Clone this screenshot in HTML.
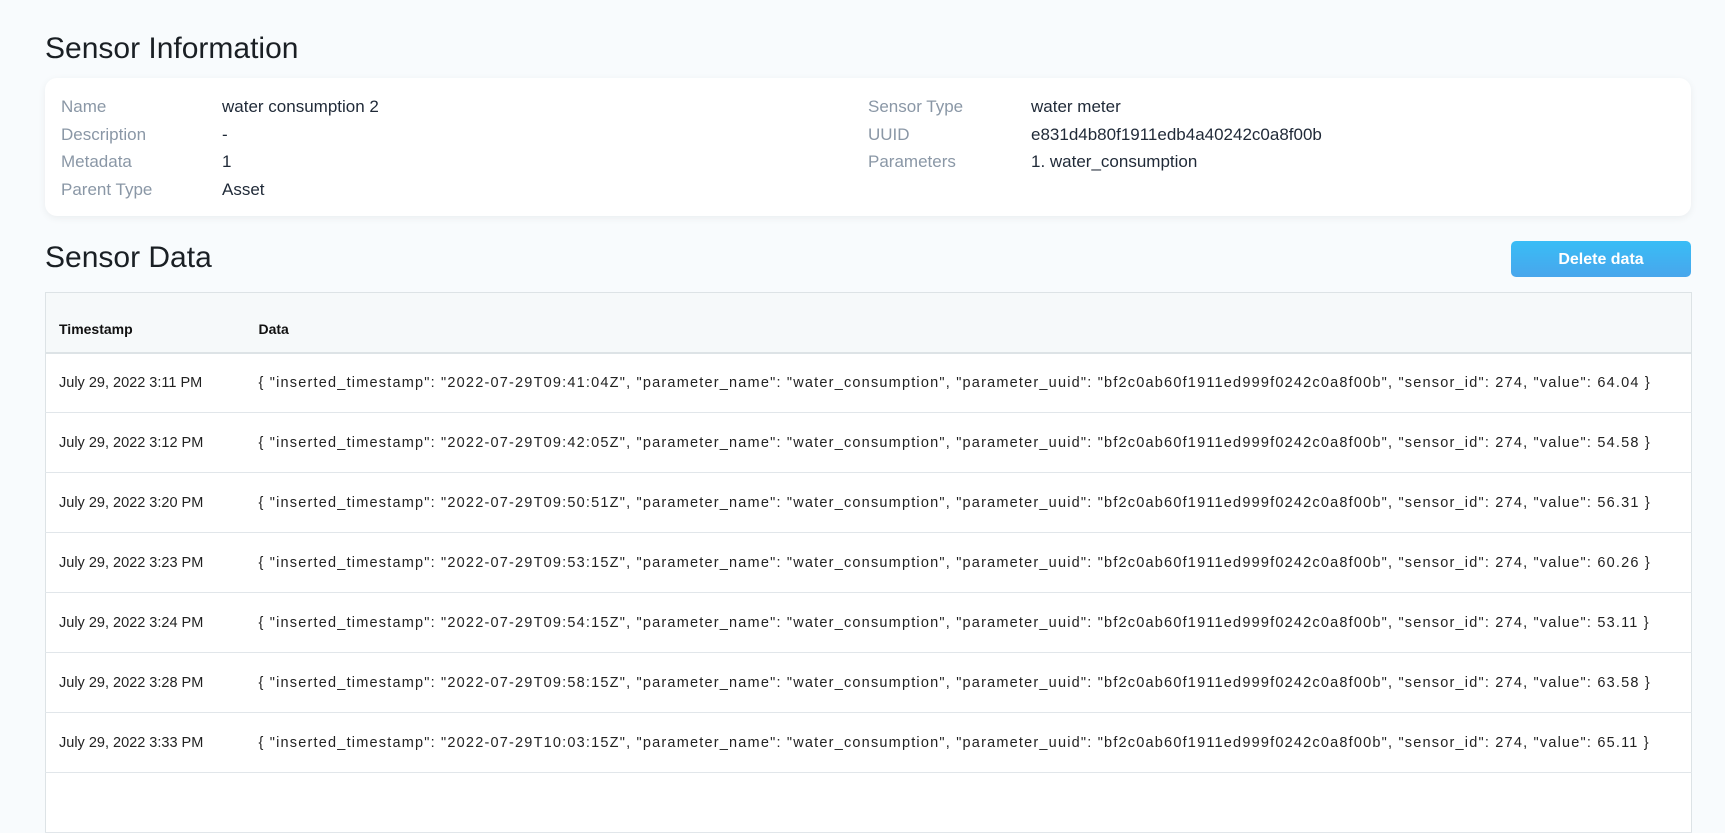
<!DOCTYPE html>
<html><head><meta charset="utf-8"><style>
*{box-sizing:border-box;margin:0;padding:0}
body{width:1725px;height:780px;overflow:hidden;background:#f8fbfd;font-family:"Liberation Sans",sans-serif;color:#1f2937;position:relative}
h2{position:absolute;left:45px;font-weight:400;font-size:30px;color:#1a1f24}
.card{position:absolute;left:45px;top:78px;width:1646px;height:138px;background:#fff;border-radius:12px;box-shadow:0 2px 8px rgba(0,0,0,0.06)}
.lab{position:absolute;font-size:17px;color:#8a97a6}
.val{position:absolute;font-size:17px;color:#1f2937}
.btn{position:absolute;left:1511px;top:241px;width:180px;height:36px;border-radius:5px;background:linear-gradient(180deg,#39bdf6,#48a6ec);color:#fff;font-weight:700;font-size:16px;text-align:center;line-height:37px}
table{position:absolute;left:45px;top:292px;width:1647px;border-collapse:collapse;border:1px solid #dde3e6;background:#fff;font-size:14.5px}
th{background:#f6f9fa;height:60px;padding-top:14px;text-align:left;font-weight:700;font-size:14px;color:#111;border-bottom:2px solid #dde3e6}
td{height:60px;border-bottom:1px solid #e1e6ea;color:#222;white-space:nowrap}
td+td{letter-spacing:1.2px}
th:first-child,td:first-child{padding-left:13px;width:213px}
</style></head><body>
<h2 style="top:32px">Sensor Information</h2>
<div class="card"></div>
<div class="lab" style="left:61px;top:97px">Name</div><div class="val" style="left:222px;top:97px">water consumption 2</div>
<div class="lab" style="left:61px;top:125px">Description</div><div class="val" style="left:222px;top:125px">-</div>
<div class="lab" style="left:61px;top:152px">Metadata</div><div class="val" style="left:222px;top:152px">1</div>
<div class="lab" style="left:61px;top:180px">Parent Type</div><div class="val" style="left:222px;top:180px">Asset</div>
<div class="lab" style="left:868px;top:97px">Sensor Type</div><div class="val" style="left:1031px;top:97px">water meter</div>
<div class="lab" style="left:868px;top:125px">UUID</div><div class="val" style="left:1031px;top:125px">e831d4b80f1911edb4a40242c0a8f00b</div>
<div class="lab" style="left:868px;top:152px">Parameters</div><div class="val" style="left:1031px;top:152px">1. water_consumption</div>
<h2 style="top:241px">Sensor Data</h2>
<div class="btn">Delete data</div>
<table>
<tr><th>Timestamp</th><th>Data</th></tr>
<tr><td>July 29, 2022 3:11 PM</td><td>{ "inserted_timestamp": "2022-07-29T09:41:04Z", "parameter_name": "water_consumption", "parameter_uuid": "bf2c0ab60f1911ed999f0242c0a8f00b", "sensor_id": 274, "value": 64.04 }</td></tr>
<tr><td>July 29, 2022 3:12 PM</td><td>{ "inserted_timestamp": "2022-07-29T09:42:05Z", "parameter_name": "water_consumption", "parameter_uuid": "bf2c0ab60f1911ed999f0242c0a8f00b", "sensor_id": 274, "value": 54.58 }</td></tr>
<tr><td>July 29, 2022 3:20 PM</td><td>{ "inserted_timestamp": "2022-07-29T09:50:51Z", "parameter_name": "water_consumption", "parameter_uuid": "bf2c0ab60f1911ed999f0242c0a8f00b", "sensor_id": 274, "value": 56.31 }</td></tr>
<tr><td>July 29, 2022 3:23 PM</td><td>{ "inserted_timestamp": "2022-07-29T09:53:15Z", "parameter_name": "water_consumption", "parameter_uuid": "bf2c0ab60f1911ed999f0242c0a8f00b", "sensor_id": 274, "value": 60.26 }</td></tr>
<tr><td>July 29, 2022 3:24 PM</td><td>{ "inserted_timestamp": "2022-07-29T09:54:15Z", "parameter_name": "water_consumption", "parameter_uuid": "bf2c0ab60f1911ed999f0242c0a8f00b", "sensor_id": 274, "value": 53.11 }</td></tr>
<tr><td>July 29, 2022 3:28 PM</td><td>{ "inserted_timestamp": "2022-07-29T09:58:15Z", "parameter_name": "water_consumption", "parameter_uuid": "bf2c0ab60f1911ed999f0242c0a8f00b", "sensor_id": 274, "value": 63.58 }</td></tr>
<tr><td>July 29, 2022 3:33 PM</td><td>{ "inserted_timestamp": "2022-07-29T10:03:15Z", "parameter_name": "water_consumption", "parameter_uuid": "bf2c0ab60f1911ed999f0242c0a8f00b", "sensor_id": 274, "value": 65.11 }</td></tr>
<tr><td>&nbsp;</td><td></td></tr>
</table>
</body></html>
